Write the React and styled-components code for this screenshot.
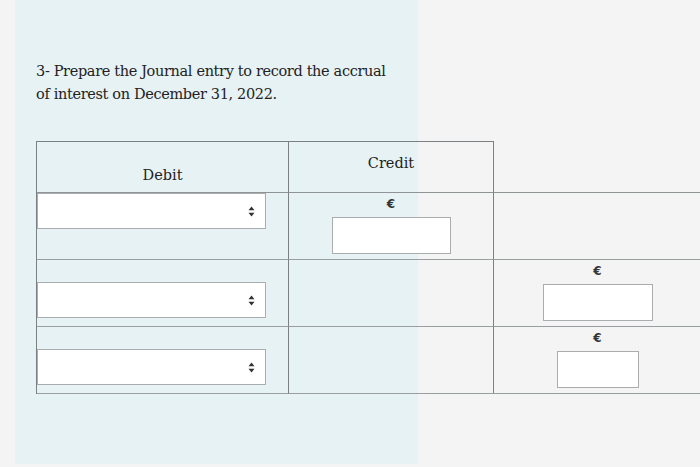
import React from 'react'
import styled, { createGlobalStyle } from 'styled-components'

const GlobalStyle = createGlobalStyle`
  html, body {
    margin: 0;
    padding: 0;
  }
  body {
    background: linear-gradient(#e7f2f5, #e7f2f5) no-repeat 15px 0 / 403px 464px, #f4f4f4;
    font-family: "DejaVu Serif", "Liberation Serif", serif;
    color: #222;
    width: 700px;
    height: 467px;
    overflow: hidden;
  }
`

const Page = styled.div`
  padding: 60px 0 0 36px;
`

const Question = styled.p`
  margin: 0 0 35px;
  font-size: 14.5px;
  line-height: 23px;
  width: 365px;
  letter-spacing: -0.35px;
`

const Table = styled.div`
  display: grid;
  grid-template-columns: 252px 205px 207px;
  grid-template-rows: 52px 67px 67px 67px;
  border-left: 1px solid #7a8083;
`

const HeadCell = styled.div`
  display: flex;
  justify-content: center;
  align-items: ${({ $low }) => ($low ? 'flex-end' : 'flex-start')};
  padding: ${({ $low }) => ($low ? '0 0 9px' : '13px 0 0')};
  font-size: 14.5px;
  border-top: ${({ $open }) => ($open ? 'none' : '1px solid #7a8083')};
  border-right: ${({ $open }) => ($open ? 'none' : '1px solid #7a8083')};
  border-bottom: 1px solid #8f9597;
`

const Cell = styled.div`
  display: flex;
  flex-direction: column;
  align-items: ${({ $center }) => ($center ? 'center' : 'flex-start')};
  padding-top: ${({ $top }) => $top}px;
  border-right: ${({ $open }) => ($open ? 'none' : '1px solid #7a8083')};
  border-bottom: 1px solid #999ea0;
`

const Select = styled.div`
  box-sizing: border-box;
  width: 229px;
  height: 36px;
  background: #fff;
  border: 1px solid #a9adaf;
  display: flex;
  align-items: center;
  justify-content: flex-end;
  padding-right: 10px;
`

const Euro = styled.span`
  font-family: "DejaVu Sans", sans-serif;
  font-size: 12px;
  font-weight: bold;
  line-height: 14px;
  color: #333;
  margin-bottom: ${({ $gap }) => $gap}px;
`

const Input = styled.div`
  box-sizing: border-box;
  width: ${({ $w }) => $w}px;
  height: 37px;
  background: #fff;
  border: 1px solid #a9adaf;
`

const Arrows = () => (
  <svg width="7" height="11" viewBox="0 0 7 11">
    <path d="M3.5 0.5 L6.5 4.3 H0.5 Z M3.5 10.5 L6.5 6.7 H0.5 Z" fill="#333" />
  </svg>
)

const SelectBox = () => (
  <Select>
    <Arrows />
  </Select>
)

const Amount = ({ w }) => (
  <>
    <Euro $gap={6}>€</Euro>
    <Input $w={w} />
  </>
)

const App = () => (
  <>
    <GlobalStyle />
    <Page>
      <Question>
        3- Prepare the Journal entry to record the accrual of interest on December 31, 2022.
      </Question>
      <Table>
        <HeadCell $low>Debit</HeadCell>
        <HeadCell>Credit</HeadCell>
        <HeadCell $open />

        <Cell $top={0}>
          <SelectBox />
        </Cell>
        <Cell $center $top={4}>
          <Amount w={119} />
        </Cell>
        <Cell $open />

        <Cell $top={22}>
          <SelectBox />
        </Cell>
        <Cell />
        <Cell $open $center $top={4}>
          <Amount w={110} />
        </Cell>

        <Cell $top={22}>
          <SelectBox />
        </Cell>
        <Cell />
        <Cell $open $center $top={4}>
          <Amount w={82} />
        </Cell>
      </Table>
    </Page>
  </>
)

export default App
